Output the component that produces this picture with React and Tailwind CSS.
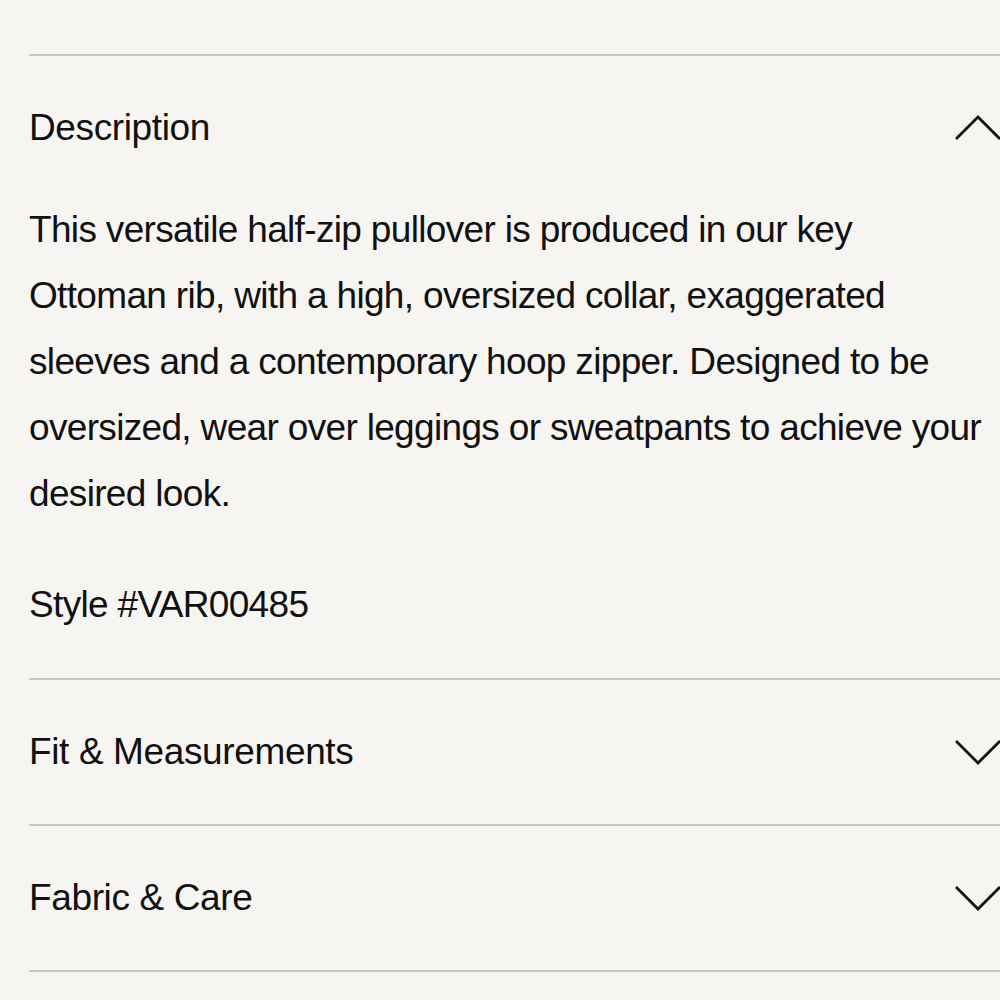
import { useState } from 'react'

const SECTIONS = [
  {
    id: 'description',
    title: 'Description',
    body: 'This versatile half-zip pullover is produced in our key Ottoman rib, with a high, oversized collar, exaggerated sleeves and a contemporary hoop zipper. Designed to be oversized, wear over leggings or sweatpants to achieve your desired look.',
    style: 'Style #VAR00485',
  },
  { id: 'fit', title: 'Fit & Measurements' },
  { id: 'fabric', title: 'Fabric & Care' },
]

function Chevron({ up }) {
  return (
    <svg width="46" height="26" viewBox="0 0 46 26" fill="none" stroke="#111" strokeWidth="2.8" strokeLinecap="square">
      {up ? <path d="M2 23 L23 2 L44 23" /> : <path d="M2 3 L23 24 L44 3" />}
    </svg>
  )
}

export default function App() {
  const [open, setOpen] = useState('description')

  return (
    <div
      className="min-h-[1000px] w-[1000px] overflow-hidden bg-[#f7f5f2] pt-[54px] pl-[29px] text-[#111]"
      style={{ fontFamily: '"Liberation Sans", Arial, sans-serif' }}
    >
      <div className="w-[971px] border-t-2 border-[#c9c5c0]">
        {SECTIONS.map(s => {
          const isOpen = open === s.id
          return (
            <div key={s.id} className="border-b-2 border-[#c9c5c0]">
              <button
                onClick={() => setOpen(isOpen ? null : s.id)}
                className="flex h-[144px] w-full items-center justify-between text-left"
              >
                <span className="text-[37px] tracking-[-0.01em]">{s.title}</span>
                <span className="mr-[-1px]"><Chevron up={isOpen} /></span>
              </button>
              {isOpen && (
                <div className="-mt-[3px] pb-[40px] text-[37px] leading-[66px] tracking-[-0.018em]">
                  <p className="pr-[8px]">{s.body}</p>
                  <p className="mt-[45px]">{s.style}</p>
                </div>
              )}
            </div>
          )
        })}
      </div>
    </div>
  )
}
